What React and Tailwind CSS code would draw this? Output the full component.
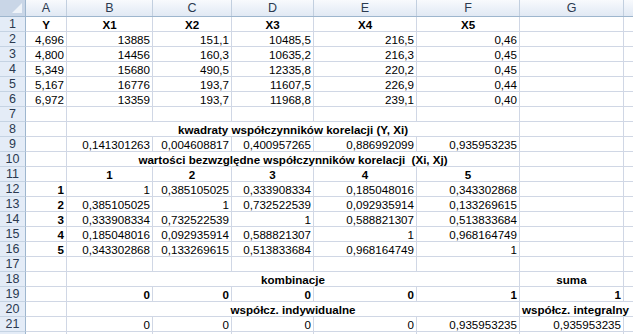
import React from "react";

const W = [41, 86, 79, 82, 103, 103, 104];
const WCLS = ["w-[41px]", "w-[86px]", "w-[79px]", "w-[82px]", "w-[103px]", "w-[103px]", "w-[104px]"];
const LETTERS = ["A", "B", "C", "D", "E", "F", "G"];

// cell spec: {v, b (bold), a: 'r'|'c'|'l'}
const R = (v) => ({ v, a: "r" });
const RB = (v) => ({ v, a: "r", b: true });
const CB = (v) => ({ v, a: "c", b: true });
const E = { v: "" };

const rows = [
  { n: 1, cells: [CB("Y"), CB("X1"), CB("X2"), CB("X3"), CB("X4"), CB("X5"), E] },
  { n: 2, cells: [R("4,696"), R("13885"), R("151,1"), R("10485,5"), R("216,5"), R("0,46"), E] },
  { n: 3, cells: [R("4,800"), R("14456"), R("160,3"), R("10635,2"), R("216,3"), R("0,45"), E] },
  { n: 4, cells: [R("5,349"), R("15680"), R("490,5"), R("12335,8"), R("220,2"), R("0,45"), E] },
  { n: 5, cells: [R("5,167"), R("16776"), R("193,7"), R("11607,5"), R("226,9"), R("0,44"), E] },
  { n: 6, cells: [R("6,972"), R("13359"), R("193,7"), R("11968,8"), R("239,1"), R("0,40"), E] },
  { n: 7, cells: [E, E, E, E, E, E, E] },
  { n: 8, merged: "kwadraty współczynników korelacji (Y, Xi)", a0: E, g: E },
  { n: 9, cells: [E, R("0,141301263"), R("0,004608817"), R("0,400957265"), R("0,886992099"), R("0,935953235"), E] },
  { n: 10, merged: "wartości bezwzględne współczynników korelacji\u00a0 (Xi, Xj)", a0: E, g: E },
  { n: 11, cells: [E, CB("1"), CB("2"), CB("3"), CB("4"), CB("5"), E] },
  { n: 12, cells: [RB("1"), R("1"), R("0,385105025"), R("0,333908334"), R("0,185048016"), R("0,343302868"), E] },
  { n: 13, cells: [RB("2"), R("0,385105025"), R("1"), R("0,732522539"), R("0,092935914"), R("0,133269615"), E] },
  { n: 14, cells: [RB("3"), R("0,333908334"), R("0,732522539"), R("1"), R("0,588821307"), R("0,513833684"), E] },
  { n: 15, cells: [RB("4"), R("0,185048016"), R("0,092935914"), R("0,588821307"), R("1"), R("0,968164749"), E] },
  { n: 16, cells: [RB("5"), R("0,343302868"), R("0,133269615"), R("0,513833684"), R("0,968164749"), R("1"), E] },
  { n: 17, cells: [E, E, E, E, E, E, E] },
  { n: 18, merged: "kombinacje", a0: E, g: CB("suma") },
  { n: 19, cells: [E, RB("0"), RB("0"), RB("0"), RB("0"), RB("1"), RB("1")] },
  { n: 20, merged: "współcz. indywidualne", a0: E, g: { v: "współcz. integralny", a: "l", b: true, over: true } },
  { n: 21, cells: [E, R("0"), R("0"), R("0"), R("0"), R("0,935953235"), R("0,935953235")] },
  { n: 22, cells: [E, E, E, E, E, E, E] },
];

const FONT = { fontFamily: '"Liberation Sans", Arial, sans-serif' };

function Cell({ c, w, noRight }) {
  const align =
    c.a === "r" ? "justify-end pr-[2px]" : c.a === "c" ? "justify-center" : "justify-start pl-[2px]";
  return (
    <div
      className={`${w} shrink-0 h-[15px] border-b border-[#d0d7e5] ${noRight ? "" : "border-r"} flex ${align} pt-px text-[11.6px] leading-[14px] whitespace-nowrap text-black ${c.b ? "font-bold" : ""} relative z-10`}
    >
      {c.v}
    </div>
  );
}

function RowHead({ n }) {
  return (
    <div className="w-[26px] shrink-0 h-[15px] bg-[#e4ecf7] border-r border-b border-r-[#9eb6ce] border-b-[#c5d3e3] flex justify-center items-center text-[12.5px] leading-[14px] text-[#2b3a50]">
      {n}
    </div>
  );
}

export default function App() {
  return (
    <div className="w-[633px] h-[334px] overflow-hidden bg-white" style={FONT}>
      {/* column header */}
      <div className="flex h-[17px] border-b border-[#9eb6ce] bg-gradient-to-b from-[#f8fafd] to-[#e1e9f4]">
        <div className="w-[26px] shrink-0 h-[16px] border-r border-[#9eb6ce] bg-[#c9d6e7] relative">
          <svg className="absolute right-[3px] bottom-[3px]" width="10" height="10" viewBox="0 0 10 10">
            <polygon points="10,0 10,10 0,10" fill="#eef3f9" />
          </svg>
        </div>
        {LETTERS.map((l, i) => (
          <div
            key={l}
            className={`${WCLS[i]} shrink-0 h-[16px] border-r border-[#c2cfdf] flex items-center justify-center text-[12.5px] text-[#2b3a50]`}
          >
            {l}
          </div>
        ))}
        <div className="flex-1" />
      </div>
      {rows.map((r) => (
        <div key={r.n} className="flex">
          <RowHead n={r.n} />
          {r.merged ? (
            <>
              <Cell c={r.a0} w={WCLS[0]} />
              <Cell c={{ v: r.merged, a: "c", b: true }} w="w-[453px]" />
              <Cell c={r.g} w={WCLS[6]} noRight={!!r.g.over} />
            </>
          ) : (
            r.cells.map((c, i) => <Cell key={i} c={c} w={WCLS[i]} />)
          )}
          <div className="flex-1 h-[15px] border-b border-[#d0d7e5]" />
        </div>
      ))}
    </div>
  );
}
